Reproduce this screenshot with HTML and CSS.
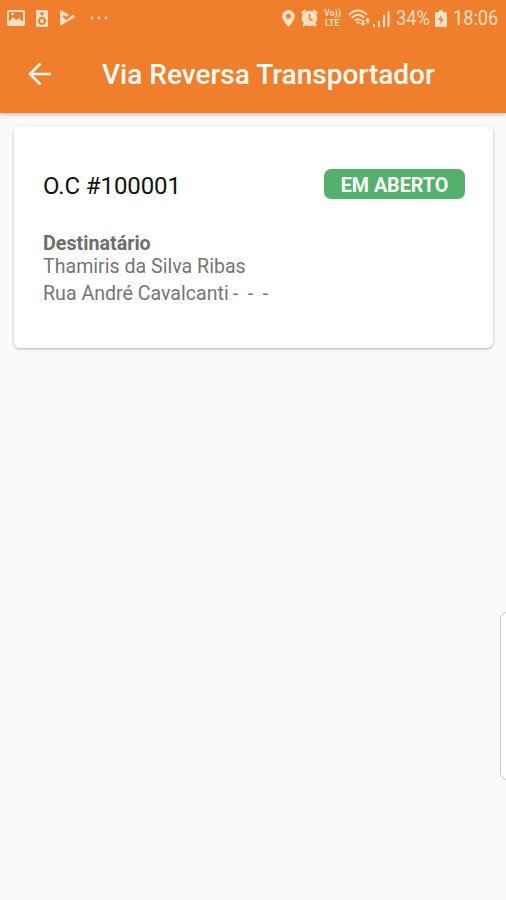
FILE: index.html
```html
<!DOCTYPE html>
<html lang="pt-BR">
<head>
<meta charset="utf-8">
<title>Via Reversa Transportador</title>
<link rel="stylesheet" href="styles.css">
</head>
<body>
<header class="top">
  <div class="status">
    <svg class="picture" width="18" height="16" viewBox="0 0 18 16"><path fill="currentColor" fill-rule="evenodd" d="M2 0h14q2 0 2 2v12q0 2-2 2H2q-2 0-2-2V2q0-2 2-2zM2 2v10l4-5 3 3 3-2 4 4V2zM4 3h3v2H4z"/></svg>
    <svg class="speaker" width="12" height="17" viewBox="0 0 12 17"><path fill="currentColor" fill-rule="evenodd" d="M1 0h10l1 1v15l-1 1H1l-1-1V1zM6 2a1.7 1.7 0 1 0 .01 0zM6 7a4 4 0 1 0 .01 0zM6 9a2 2 0 1 1-.01 0z"/></svg>
    <svg class="play" width="15" height="16" viewBox="0 0 15 16"><path fill="currentColor" d="M0 0l9 4.500-2.500 2.500-2.500-2-1.500 1.500L6.500 10 13 4.500l2 2.500L0 16z"/></svg>
    <svg class="dots" width="18" height="4" viewBox="0 0 18 4"><g fill="currentColor"><circle cx="2" cy="2" r="1.4"/><circle cx="9" cy="2" r="1.4"/><circle cx="16" cy="2" r="1.4"/></g></svg>
    <div class="indicators">
      <svg class="pin" width="13" height="17" viewBox="0 0 13 17"><path fill="currentColor" fill-rule="evenodd" d="M6.500 0A6.300 6.300 0 0 0 .2 6.300C.2 10.500 6.500 17 6.500 17s6.300-6.500 6.300-10.700A6.300 6.300 0 0 0 6.500 0zM6.500 3.800a2.400 2.400 0 1 1-.01 0z"/></svg>
      <svg class="alarm" width="17" height="18" viewBox="0 0 17 18"><circle cx="8.500" cy="9.500" r="7.800" fill="currentColor"/><path d="M.7 4.500L4.500 1M16.300 4.500L12.500 1M4 15l-2 2M13 15l2 2" stroke="currentColor" stroke-width="2.200"/><path class="hands" d="M8.500 5v5l3 1.500"/></svg>
      <div class="volte"><span>Vo))</span><span class="lte">LTE</span></div>
      <svg class="wifi" width="23" height="18" viewBox="0 0 23 18"><g fill="none" stroke="currentColor" stroke-width="1.900"><path d="M1 5.500Q10 -2.500 19 5.500M3.700 8.700Q10 3 16.300 8.700M6.600 11.700Q10 8.700 13.400 11.700"/></g><path fill="currentColor" d="M8 13.300q2-1.500 4 0l-2 2.500zM12 14h2v-3h2v3h1.500L15 17zM17 11.500l2.700-3 2.600 3h-1.500v3H18.600v-3z"/></svg>
      <svg class="signal" width="17" height="17" viewBox="0 0 17 17"><path fill="currentColor" d="M0 14h2v3H0zM5 11h2v6H5zM10 5h2v12h-2zM14.500 1h2v16h-2z"/></svg>
      <span class="percent">34%</span>
      <svg class="battery" width="12" height="17" viewBox="0 0 12 17"><path fill="currentColor" d="M4 0h4v2h3l1 1v13l-1 1H1l-1-1V3l1-1h3z"/><path class="bolt" d="M6.500 5L3 10h2.500v4L9 9H6.500z"/></svg>
      <span class="clock">18:06</span>
    </div>
  </div>
  <div class="toolbar">
    <svg class="back" width="24" height="24" viewBox="0 0 24 24"><path d="M23 12H2M12.500 1.500L2 12l10.500 10.500"/></svg>
    <h1 class="title">Via Reversa Transportador</h1>
  </div>
</header>
<main class="content">
  <article class="card">
    <div class="card-head">
      <h2 class="order">O.C #100001</h2>
      <span class="badge">EM ABERTO</span>
    </div>
    <div class="label">Destinatário</div>
    <div class="name">Thamiris da Silva Ribas</div>
    <div class="address"><span>Rua André Cavalcanti</span><span class="dashes">- - -</span></div>
  </article>
</main>
<div class="edge-handle"></div>
</body>
</html>
```
FILE: styles.css
```css
* { box-sizing: border-box; }
body {
  margin: 0;
  height: 900px;
  overflow: hidden;
  background: #fafafa;
  font-family: Roboto, "Liberation Sans", sans-serif;
}
svg { display: block; flex: none; }
.top {
  height: 113px;
  background: #ef7f2d;
  box-shadow: 0 1px 5px rgba(0, 0, 0, .3);
}
.status {
  display: flex;
  align-items: center;
  height: 36px;
  padding: 0 7px 0 7px;
  color: #fddfc2;
}
.speaker { margin-left: 11px; }
.play { margin-left: 12px; }
.dots { margin-left: 15px; }
.indicators { display: flex; align-items: center; margin-left: auto; }
.alarm { margin-left: 6px; }
.hands { fill: none; stroke: #ef7f2d; stroke-width: 1.4; }
.volte {
  display: flex;
  flex-direction: column;
  width: 18px;
  margin-left: 6px;
  font-size: 9px;
  font-weight: 700;
  line-height: 10px;
}
.lte { padding-left: 1px; }
.wifi { margin-left: 6px; }
.signal { margin-left: 2px; }
.percent, .clock {
  font-size: 20px;
  line-height: 26px;
  white-space: nowrap;
  transform: scaleX(.91);
  transform-origin: left center;
}
.percent { width: 34px; margin: 0 0 0 6px; }
.battery { margin-left: 5px; }
.bolt { fill: #c79068; }
.clock { width: 46px; margin: 0 0 0 6px; }
.toolbar {
  display: flex;
  align-items: center;
  height: 75px;
  padding-left: 28px;
  color: #fffaf0;
}
.back { fill: none; stroke: currentColor; stroke-width: 2.6; }
.title {
  margin: 2px 0 0 50px;
  font-size: 28px;
  font-weight: 500;
  line-height: 32px;
  white-space: nowrap;
}
.content { padding: 13px 13px 0 14px; }
.card {
  height: 222px;
  padding: 43px 28px 0 29px;
  background: #fff;
  border-radius: 6px;
  box-shadow: 0 1px 3px rgba(0, 0, 0, .3);
}
.card-head { display: flex; justify-content: space-between; height: 63px; }
.order {
  margin: 2px 0 0;
  font-size: 24px;
  font-weight: 400;
  letter-spacing: -.1px;
  line-height: 30px;
  color: #111;
}
.badge {
  width: 141px;
  height: 30px;
  border-radius: 7px;
  background: #55b06c;
  color: #f8fff8;
  font-size: 19.7px;
  font-weight: 700;
  line-height: 33px;
  text-align: center;
}
.label, .name, .address {
  color: #757575;
  font-size: 19.6px;
  line-height: 24px;
  white-space: nowrap;
}
.label { font-size: 19.7px; font-weight: 700; line-height: 23px; color: #6d6d6d; }
.address { display: flex; gap: 4px; margin-top: 3px; }
.dashes { word-spacing: 4.8px; }
.edge-handle {
  position: absolute;
  top: 612px;
  right: -8px;
  width: 14px;
  height: 168px;
  border: 1px solid #c8c8c8;
  border-radius: 7px;
  background: #fff;
}
```
